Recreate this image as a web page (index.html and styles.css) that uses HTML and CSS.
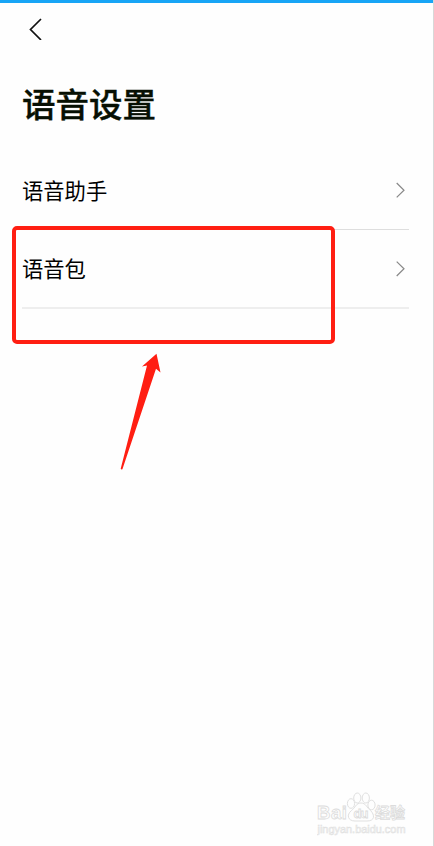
FILE: index.html
```html
<!DOCTYPE html>
<html lang="zh-CN">
	<head>
		<meta charset="UTF-8" />
		<title>语音设置</title>
		<link rel="stylesheet" href="styles.css">
	</head>
	<body>
		<div class="screen">
			<header class="header">
				<svg class="back" width="14" height="22" viewBox="0 0 14 22">
					<path d="M12 1 L1.5 11.5 L12 22" />
				</svg>
				<h1>语音设置</h1>
			</header>

			<ul class="settings">
				<li class="row">
					<span>语音助手</span>
					<svg class="arrow" width="10" height="16" viewBox="0 0 10 16">
						<path d="M0.7 1 L8 8.2 L0.7 15.4" />
					</svg>
				</li>
				<li class="row row-last">
					<span>语音包</span>
					<svg class="arrow" width="10" height="16" viewBox="0 0 10 16">
						<path d="M0.7 0.6 L8 7.8 L0.7 15" />
					</svg>
				</li>
			</ul>

			<!-- highlight around the voice pack row -->
			<div class="highlight"></div>
			<svg class="pointer" width="42" height="118" viewBox="0 0 42 118">
				<path d="M36.5 0.8 L40.5 19.5 L36 15.8 L2.5 116 Q1.5 117.2 0.7 115.8 L27 12.5 L22 13.5 Z" />
			</svg>

			<div class="watermark">
				<svg width="92" height="48" viewBox="0 0 92 48">
					<g class="paw">
						<ellipse cx="34" cy="14.5" rx="3.6" ry="4.8" />
						<ellipse cx="40.3" cy="9" rx="3.6" ry="5" />
						<ellipse cx="48.8" cy="9" rx="3.6" ry="5" />
						<ellipse cx="54.5" cy="16" rx="3.6" ry="4.8" />
						<path d="M44 14 C39 14 38 19 34.5 21.5 C29 26 31 32 38 32 H50 C58 32 58 26 53.5 21.5 C50 19 49 14 44 14 Z" />
					</g>
					<g class="brand">
						<text x="0" y="30" textLength="30">Bai</text>
						<text class="du" x="36.5" y="29" textLength="15">du</text>
						<text class="cn" x="58" y="29" textLength="30">经验</text>
					</g>
					<text class="site" x="0.5" y="43.5" textLength="88" lengthAdjust="spacingAndGlyphs">jingyan.baidu.com</text>
				</svg>
			</div>
		</div>
	</body>
</html>
```

FILE: styles.css
```css
* {
	box-sizing: border-box;
}
body {
	margin: 0;
	background-color: #fefefe;
	font-family: "Noto Sans CJK SC", sans-serif;
	color: #000;
}
.screen {
	position: relative;
	height: 846px;
	padding: 0 24px 0 22px;
	border-right: 1px solid #d8d8d8;
	overflow: hidden;
}
.screen::before {
	content: "";
	position: absolute;
	left: 0;
	top: 0;
	width: 100%;
	height: 3px;
	background-color: #18a5f6;
}
.header {
	padding-top: 18px;
}
.back {
	display: block;
	margin-left: 7px;
	fill: none;
	stroke: #111;
	stroke-width: 1.7;
}
h1 {
	margin: 39px 0 0;
	font-size: 33.5px;
	line-height: 48px;
	font-weight: 500;
	color: #071003;
	-webkit-text-stroke: 0.4px #071003;
}
.settings {
	margin: 24px 0 0;
	padding: 0;
	list-style: none;
}
.row {
	display: flex;
	align-items: center;
	justify-content: space-between;
	height: 79px;
	border-bottom: 1px solid #dedede;
	font-size: 21.3px;
}
.row span {
	padding-bottom: 2px;
}
.row-last {
	border-bottom: 2px solid #eee;
}
.arrow {
	margin-right: 3px;
	fill: none;
	stroke: #888;
	stroke-width: 1.2;
}
.highlight {
	position: absolute;
	left: 12px;
	top: 226px;
	width: 323px;
	height: 118px;
	border: 4px solid #ff1e12;
	border-radius: 5px;
}
.pointer {
	position: absolute;
	left: 120px;
	top: 353px;
	fill: #ff1e12;
}
.watermark {
	position: absolute;
	left: 317px;
	top: 789px;
}
.paw {
	fill: #fefefe;
	stroke: #e0e0e0;
	stroke-width: 1;
}
.brand {
	font-family: "Liberation Sans", "Noto Sans CJK SC", sans-serif;
	font-size: 18.5px;
	font-weight: bold;
	fill: #fefefe;
	stroke: #dcdcdc;
	stroke-width: 0.8;
}
.du {
	font-size: 13px;
}
.cn {
	font-size: 15px;
}
.site {
	font-family: "Liberation Sans", sans-serif;
	font-size: 10px;
	fill: #fafafa;
	stroke: #e0e0e0;
	stroke-width: 0.5;
}
```
